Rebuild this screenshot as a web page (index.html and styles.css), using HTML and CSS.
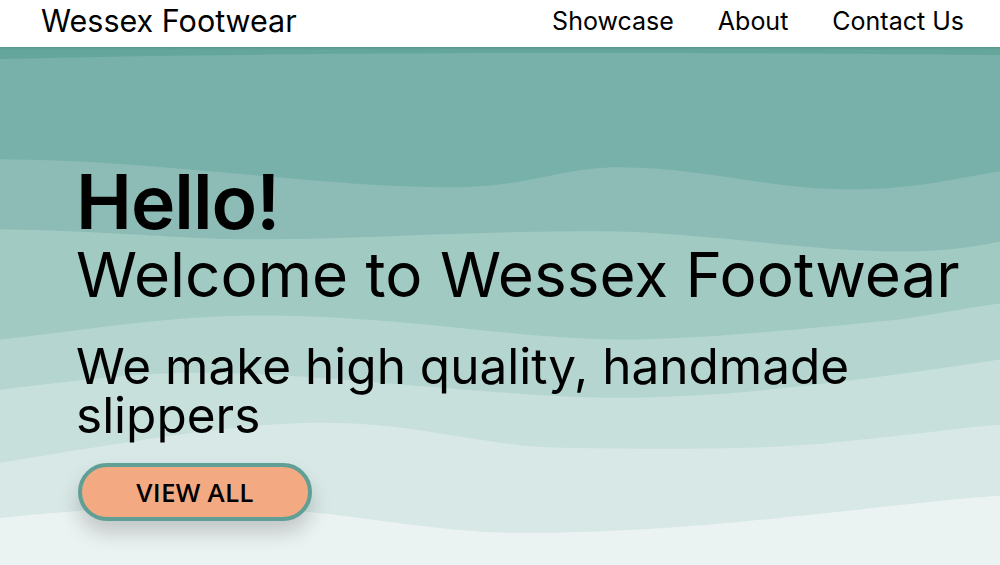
FILE: index.html
```html
<!DOCTYPE html>
<html>
	<head>
		<meta charset="utf-8">
		<title>Wessex Footwear</title>
		<link rel="stylesheet" href="styles.css">
	</head>
	<body>
		<header class="topbar">
			<a class="brand" href="#">Wessex Footwear</a>
			<nav class="menu">
				<a href="#">Showcase</a>
				<a href="#">About</a>
				<a href="#">Contact Us</a>
			</nav>
		</header>

		<section class="hero">
			<!-- 波浪背景 -->
			<svg class="waves" viewBox="0 0 1000 517" preserveAspectRatio="none">
				<rect width="1000" height="517" fill="#64a69b"/>
				<path fill="#78b1aa" d="M0,12 C250,6 600,4 1000,8 L1000,517 L0,517 Z"/>
				<path fill="#8cbcb5" d="M0,112 C150,112 320,140 450,140 C530,140 560,120 620,120 C700,120 770,142 850,142 C920,142 960,130 1000,124 L1000,517 L0,517 Z"/>
				<path fill="#a1cac3" d="M0,182 C120,184 180,192 250,192 C380,192 440,184 600,184 C700,184 800,204 900,204 C950,204 980,198 1000,194 L1000,517 L0,517 Z"/>
				<path fill="#b5d6d0" d="M0,292 C90,282 170,268 260,268 C400,268 520,292 620,292 C700,292 820,280 900,272 C940,266 970,260 1000,256 L1000,517 L0,517 Z"/>
				<path fill="#c8e0dc" d="M0,342 C80,332 140,325 200,325 C320,325 500,350 620,350 C740,350 880,330 1000,312 L1000,517 L0,517 Z"/>
				<path fill="#d8e8e6" d="M0,415 C120,395 240,375 320,375 C420,375 480,398 560,400 C680,402 780,402 860,392 C920,386 960,380 1000,377 L1000,517 L0,517 Z"/>
				<path fill="#ebf3f2" d="M0,470 C60,464 130,458 200,458 C330,458 420,485 520,485 C620,485 700,478 780,470 C880,460 940,452 1000,448 L1000,517 L0,517 Z"/>
			</svg>

			<div class="hero-text">
				<h1 class="hello">Hello!</h1>
				<h2 class="welcome">Welcome to Wessex Footwear</h2>
				<p class="tagline">We make high quality, handmade slippers</p>
				<button class="view-all">VIEW ALL</button>
			</div>
		</section>
	</body>
</html>
```

FILE: styles.css
```css
body {
	margin: 0;
	font-family: Inter, "Noto Sans", sans-serif;
	color: #000;
	overflow: hidden;
}

a {
	color: inherit;
	text-decoration: none;
}

.topbar {
	position: relative;
	z-index: 2;
	display: flex;
	align-items: center;
	justify-content: space-between;
	box-sizing: border-box;
	height: 47px;
	padding: 0 36px 4px 41px;
	background: #fff;
	box-shadow: 0 1px 2px rgba(0, 0, 0, 0.12);
}

.brand {
	font-size: 30.5px;
	line-height: 1;
}

.menu {
	display: flex;
	gap: 44px;
}

.menu a {
	font-size: 25px;
	line-height: 1;
}

.hero {
	position: relative;
	height: 518px;
	overflow: hidden;
}

.waves {
	position: absolute;
	left: 0;
	top: 0;
	width: 100%;
	height: 100%;
	z-index: 0;
}

.hero-text {
	position: relative;
	z-index: 1;
	padding: 117px 0 0 76px;
}

.hello {
	margin: 0;
	font-size: 75px;
	font-weight: 600;
	letter-spacing: -1px;
	line-height: 1;
}

.welcome {
	margin: 5px 0 0;
	font-size: 62px;
	font-weight: 400;
	line-height: 1;
}

.tagline {
	margin: 36px 0 0;
	max-width: 820px;
	font-size: 49.5px;
	line-height: 49px;
}

.view-all {
	margin: 23px 0 0 2px;
	width: 234px;
	height: 58px;
	border: 4px solid #5f9f95;
	border-radius: 29px;
	background: #f3aa82;
	font: 600 26px "Open Sans", sans-serif;
	letter-spacing: 0.01em;
	color: #000;
	box-shadow: 0 12px 20px rgba(0, 0, 0, 0.18);
	cursor: pointer;
}
```
